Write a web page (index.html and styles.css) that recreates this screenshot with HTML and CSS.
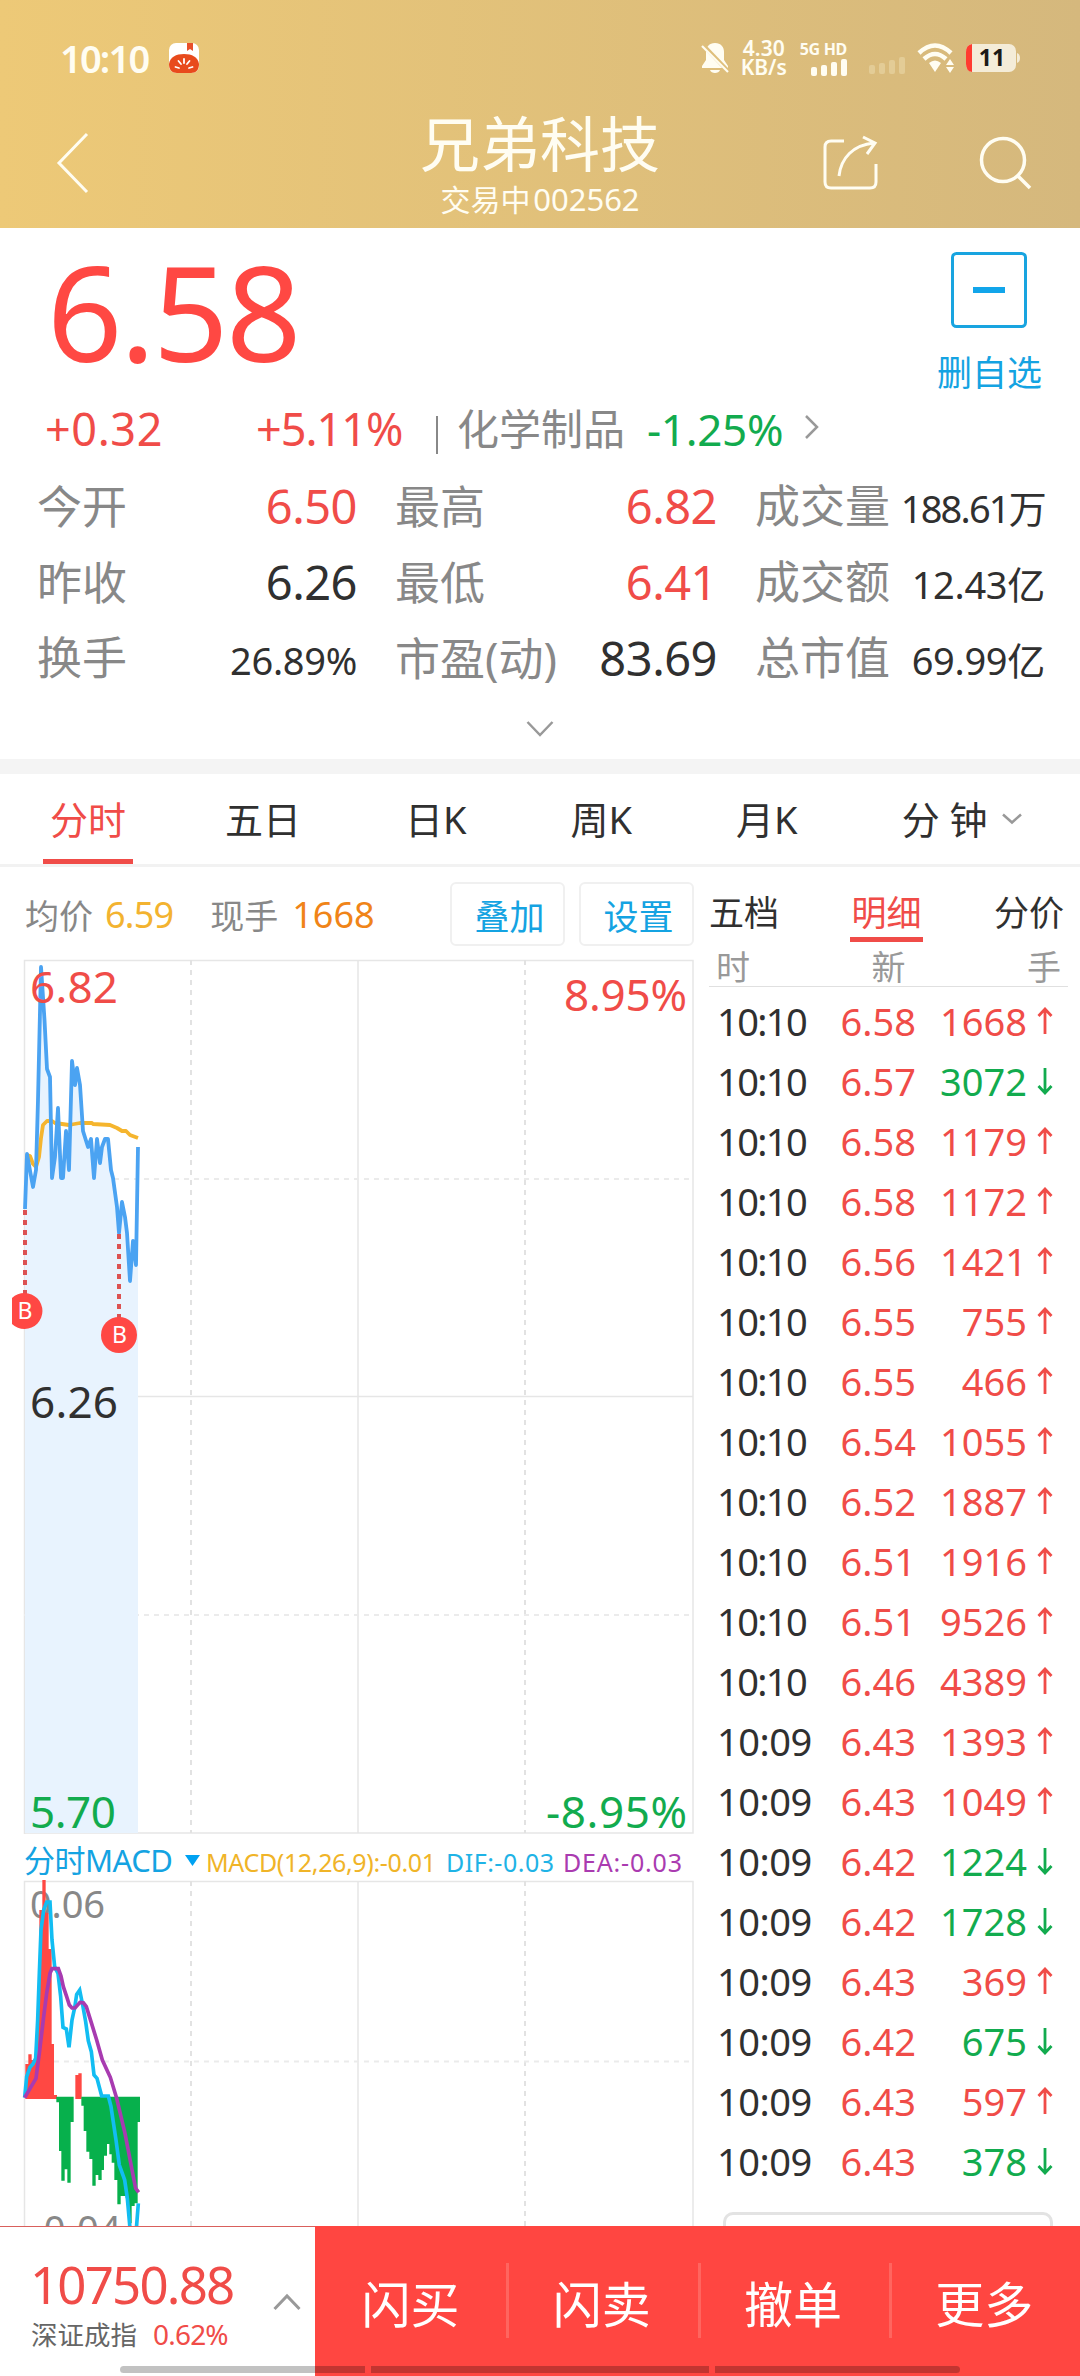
FILE: index.html
```html
<!DOCTYPE html>
<html lang="zh-CN">
<head>
    <meta charset="UTF-8">
    <meta name="viewport" content="width=device-width, initial-scale=1.0">
    <title>兄弟科技 002562</title>
    <link rel="stylesheet" href="styles.css">
</head>
<body>
    <svg width="0" height="0" class="defs">
        <symbol id="up" viewBox="0 0 16 28"><path d="M8 27V2M1.500 9L8 2l6.500 7" fill="none" stroke="currentColor" stroke-width="2.800"/></symbol>
        <symbol id="down" viewBox="0 0 16 28"><path d="M8 1v25M1.500 19L8 26l6.500-7" fill="none" stroke="currentColor" stroke-width="2.800"/></symbol>
    </svg>

    <header class="header">
        <div class="status-bar">
            <span class="clock">10:10</span>
            <svg class="tomato" width="30" height="30" viewBox="0 0 30 30">
                <rect width="30" height="30" rx="7" fill="#fff"/>
                <path d="M18 0h6v8l-3-2-3 2z" fill="#e8502a"/>
                <path d="M0 21C1 14 7 11 15 11s14 3 15 10c0 6-3 9-8 9H8c-5 0-8-3-8-9z" fill="#e84a1c"/>
                <path d="M15 16v4M9.500 18l2.500 3M20.500 18L18 21M6.500 24l3.500 1M23.500 24L20 25" stroke="#fff" stroke-width="1.800" stroke-linecap="round"/>
            </svg>
            <svg class="bell" width="28" height="32" viewBox="0 0 28 32">
                <path d="M14 1c-6 0-9 4-9 9v8l-4 6v2h26v-2l-4-6v-8c0-5-3-9-9-9zM9 28h10c-1 4-9 4-10 0z" fill="#fffdf2"/>
                <path d="M1 2l26 27" stroke="#dfbf7b" stroke-width="4"/>
                <path d="M1 4l26 26" stroke="#fffdf2" stroke-width="2.200"/>
            </svg>
            <div class="net-speed"><span>4.30</span><span>KB/s</span></div>
            <div class="signal">
                <span>5G HD</span>
                <svg width="36" height="17" viewBox="0 0 36 17" fill="#fffdf2">
                    <rect x="0" y="8" width="6" height="9" rx="2"/><rect x="10" y="6" width="6" height="11" rx="2"/>
                    <rect x="20" y="3" width="6" height="14" rx="2"/><rect x="30" y="0" width="6" height="17" rx="2"/>
                </svg>
            </div>
            <svg class="signal-off" width="36" height="17" viewBox="0 0 36 17" fill="#e3cc96">
                <rect x="0" y="8" width="6" height="9" rx="2"/><rect x="10" y="6" width="6" height="11" rx="2"/>
                <rect x="20" y="3" width="6" height="14" rx="2"/><rect x="30" y="0" width="6" height="17" rx="2"/>
            </svg>
            <svg class="wifi" width="38" height="30" viewBox="0 0 38 30">
                <path d="M2 10Q18 -5 34 10M7 16Q18 6 29 16" fill="none" stroke="#fffdf2" stroke-width="4.500"/>
                <path d="M12 20q6-5 12 0l-6 9z" fill="#fffdf2"/>
                <path d="M33 16l4 6h-8zM33 30l4-6h-8z" fill="#fffdf2"/>
            </svg>
            <svg class="battery" width="54" height="28" viewBox="0 0 54 28">
                <rect width="50" height="28" rx="7" fill="#f4ecd8"/>
                <path d="M51 9q3 1 3 5t-3 5z" fill="#f4ecd8"/>
                <path d="M6 0v28Q0 27 0 20V8Q0 1 6 0z" fill="#ff3b30"/>
                <text x="26" y="22" text-anchor="middle" class="battery-text">11</text>
            </svg>
        </div>
        <div class="nav">
            <svg class="back" width="34" height="62" viewBox="0 0 34 62"><path d="M31 2L3 31l28 29" fill="none" stroke="#fffdf2" stroke-width="3"/></svg>
            <div class="nav-title">
                <h1>兄弟科技</h1>
                <p>交易中 <span>002562</span></p>
            </div>
            <div class="nav-icons">
                <svg width="56" height="56" viewBox="0 0 56 56" fill="none" stroke="#fffdf2" stroke-width="3">
                    <path d="M22 6H9Q3 6 3 12v35q0 6 6 6h39q6 0 6-6V29"/>
                    <path d="M17 41C19 23 31 10 52 8M41 2l12 6-8 11"/>
                </svg>
                <svg width="56" height="56" viewBox="0 0 56 56" fill="none" stroke="#fffdf2" stroke-width="3.500">
                    <circle cx="25" cy="25" r="21.500"/><path d="M40 41l12 12"/>
                </svg>
            </div>
        </div>
    </header>

    <section class="quote">
        <div class="quote-top">
            <div class="price">6.58</div>
            <button class="watch-btn">
                <svg width="76" height="76" viewBox="0 0 76 76"><rect x="1.500" y="1.500" width="73" height="73" rx="4" fill="none" stroke="#18a4e0" stroke-width="3"/><path d="M22 38h32" stroke="#12a5ea" stroke-width="6"/></svg>
                <span>删自选</span>
            </button>
        </div>
        <div class="change">
            <span class="red diff">+0.32</span>
            <span class="red pct">+5.11%</span>
            <i class="bar"></i>
            <span class="sector">化学制品</span>
            <span class="green sector-pct">-1.25%</span>
            <svg width="16" height="26" viewBox="0 0 16 26"><path d="M2 2l11 11L2 24" fill="none" stroke="#999" stroke-width="2.500"/></svg>
        </div>
        <div class="stats">
            <div class="stat"><label>今开</label><b class="red">6.50</b></div>
            <div class="stat"><label>最高</label><b class="red">6.82</b></div>
            <div class="stat"><label>成交量</label><b class="small volume">188.61万</b></div>
            <div class="stat"><label>昨收</label><b>6.26</b></div>
            <div class="stat"><label>最低</label><b class="red">6.41</b></div>
            <div class="stat"><label>成交额</label><b class="small">12.43亿</b></div>
            <div class="stat"><label>换手</label><b class="small">26.89%</b></div>
            <div class="stat"><label>市盈(动)</label><b>83.69</b></div>
            <div class="stat"><label>总市值</label><b class="small">69.99亿</b></div>
        </div>
        <svg class="expand" width="28" height="18" viewBox="0 0 28 18"><path d="M1.500 2L14 15 26.500 2" fill="none" stroke="#999" stroke-width="2.500"/></svg>
    </section>

    <nav class="tabs">
        <a class="active">分时</a>
        <a>五日</a>
        <a>日K</a>
        <a>周K</a>
        <a>月K</a>
        <a class="minutes">分 钟<svg width="20" height="12" viewBox="0 0 20 12"><path d="M1 1.500l9 8 9-8" fill="none" stroke="#999" stroke-width="2.500"/></svg></a>
    </nav>

    <main class="main">
        <div class="charts">
            <div class="chart-head">
                <span class="grey">均价</span><span class="avg">6.59</span>
                <span class="grey hand-label">现手</span><span class="hand">1668</span>
                <div class="chart-btns"><button>叠加</button><button>设置</button></div>
            </div>

            <svg class="chart" width="700" height="882" viewBox="0 952 700 882">
                <path d="M24.500 1834V960.500H693V1833H24M358 960v873M24 1396.500h669" fill="none" stroke="#e6e6e6" stroke-width="1.500"/>
                <path d="M191 960v873M525 960v873" stroke="#e2e2e2" stroke-width="2" stroke-dasharray="5 5"/>
                <path d="M24 1179h669M24 1615h669" stroke="#ebebeb" stroke-width="2" stroke-dasharray="5 5"/>
                <path d="M25 1833V1209L27 1154 33 1187 36 1170 38 1100 41 967 44.500 1020 47 1069 50 1077 52 1178 55 1157 58 1108 61 1178H63L66 1131 69 1170 72 1061 75 1085 77 1068 80 1085 83 1131 88 1147 91 1139 94 1178 97 1139 100 1163 102 1147 105 1139H108L111 1170 113 1178 117 1207 119 1233 122 1202 125 1217 127 1233 130 1281 133 1241 136 1265 138 1147V1833z" fill="#e8f3fe"/>
                <polyline class="line" stroke="#f5b52e" points="27,1155 30,1156 33,1164 36,1167 39,1157 41,1138 43,1125 47,1121 52,1121 55,1123 62,1124 69,1125 80,1123 92,1123 93,1124 110,1125 117,1128 122,1131 126,1131 130,1135 138,1138"/>
                <polyline class="line" stroke="#4ba3f2" points="25,1209 27,1154 33,1187 36,1170 38,1100 41,967 44.500,1020 47,1069 50,1077 52,1178 55,1157 58,1108 61,1178 63,1178 66,1131 69,1170 72,1061 75,1085 77,1068 80,1085 83,1131 88,1147 91,1139 94,1178 97,1139 100,1163 102,1147 105,1139 108,1139 111,1170 113,1178 117,1207 119,1233 122,1202 125,1217 127,1233 130,1281 133,1241 136,1265 138,1147"/>
                <path d="M25 1210v84M119 1234v84" stroke="#dc5252" stroke-width="4" stroke-dasharray="5 5"/>
                <path d="M12 1298a18 18 0 1 1 0 26z" fill="#ff4844"/>
                <circle cx="119" cy="1335" r="18" fill="#ff4844"/>
                <text class="marker" x="25" y="1318.500">B</text>
                <text class="marker" x="119.500" y="1342.500">B</text>
                <text class="axis red" x="30" y="1003" textLength="88">6.82</text>
                <text class="axis red" x="564" y="1011" textLength="123">8.95%</text>
                <text class="axis" x="30" y="1418" textLength="88">6.26</text>
                <text class="axis green" x="30" y="1828" textLength="86">5.70</text>
                <text class="axis green" x="546" y="1828" textLength="141">-8.95%</text>
            </svg>

            <svg class="macd" width="700" height="392" viewBox="0 1834 700 392">
                <text class="macd-name" x="24" y="1872" textLength="149">分时MACD</text>
                <path d="M185 1855h15l-7.500 11z" fill="#00a2f2"/>
                <text class="macd-val" fill="#f0b428" x="206" y="1872" textLength="230">MACD(12,26,9):-0.01</text>
                <text class="macd-val" fill="#1fb3e6" x="446" y="1872" textLength="108">DIF:-0.03</text>
                <text class="macd-val" fill="#aa3bb0" x="563" y="1872" textLength="119">DEA:-0.03</text>
                <path d="M24.500 2230V1881.500H693V2230M358 1881v349" fill="none" stroke="#e6e6e6" stroke-width="1.500"/>
                <path d="M191 1881v349M525 1881v349" stroke="#e2e2e2" stroke-width="2" stroke-dasharray="5 5"/>
                <path d="M24 2061.500h669" stroke="#ebebeb" stroke-width="2" stroke-dasharray="5 5"/>
                <text class="macd-axis" x="30" y="1918" textLength="75">0.06</text>
                <text class="macd-axis" x="31" y="2243" textLength="90">-0.04</text>
                <g transform="translate(0 1840) scale(.33333)" fill="none">
                    <path stroke="#ff4843" stroke-width="10" d="M81 777V672M90 777V643M99 777V660M108 777V655M117 777V480M123 777V210M132 777V120M141 777V218M150 777V327M157 777V612M166 777V765M231 777V705M240 777V700"/>
                    <path stroke="#07b04c" stroke-width="10" d="M174 770V787M182 770V933M189 770V1022M198 770V988M207 770V1028M216 770V846M249 770V797M256 770V873M264 770V935M273 770V957M282 770V1037M291 770V1005M300 770V1020M307 770V990M316 770V947M324 770V912M333 770V943M340 770V968M348 770V1020M357 770V1093M366 770V1068M374 770V1068M382 770V1075M390 770V1150M399 770V1098M408 770V1090M415 770V846"/>
                    <polyline stroke="#12bdf2" stroke-width="11" points="74,773 80,710 90,682 99,672 107,655 113,540 118,400 123,270 131,210 140,186 150,186 156,300 164,380 174,400 182,470 189,562 199,567 207,622 216,540 224,503 230,463 239,450 248,495 257,545 265,603 274,635 282,705 291,715 305,768 325,768 333,800 348,900 358,975 374,1020 382,1075 390,1165 395,1240 408,1180 415,1090"/>
                    <polyline stroke="#a83bb0" stroke-width="11" points="74,773 108,715 118,640 131,530 140,460 150,400 156,386 175,386 183,408 190,440 200,470 208,495 216,504 225,504 240,487 250,488 259,500 273,545 290,600 307,660 331,712 350,775 375,880 400,1010 407,1045 416,1057"/>
                </g>
            </svg>
        </div>

        <aside class="trades">
            <div class="trade-tabs"><a>五档</a><a class="active">明细</a><a>分价</a></div>
            <div class="trade-head"><span>时</span><span>新</span><span>手</span></div>
            <ul class="trade-list">
                <li><time>10:10</time><b>6.58</b><em>1668</em><svg><use href="#up"/></svg></li>
                <li><time>10:10</time><b>6.57</b><em class="green">3072</em><svg class="green"><use href="#down"/></svg></li>
                <li><time>10:10</time><b>6.58</b><em>1179</em><svg><use href="#up"/></svg></li>
                <li><time>10:10</time><b>6.58</b><em>1172</em><svg><use href="#up"/></svg></li>
                <li><time>10:10</time><b>6.56</b><em>1421</em><svg><use href="#up"/></svg></li>
                <li><time>10:10</time><b>6.55</b><em>755</em><svg><use href="#up"/></svg></li>
                <li><time>10:10</time><b>6.55</b><em>466</em><svg><use href="#up"/></svg></li>
                <li><time>10:10</time><b>6.54</b><em>1055</em><svg><use href="#up"/></svg></li>
                <li><time>10:10</time><b>6.52</b><em>1887</em><svg><use href="#up"/></svg></li>
                <li><time>10:10</time><b>6.51</b><em>1916</em><svg><use href="#up"/></svg></li>
                <li><time>10:10</time><b>6.51</b><em>9526</em><svg><use href="#up"/></svg></li>
                <li><time>10:10</time><b>6.46</b><em>4389</em><svg><use href="#up"/></svg></li>
                <li><time>10:09</time><b>6.43</b><em>1393</em><svg><use href="#up"/></svg></li>
                <li><time>10:09</time><b>6.43</b><em>1049</em><svg><use href="#up"/></svg></li>
                <li><time>10:09</time><b>6.42</b><em class="green">1224</em><svg class="green"><use href="#down"/></svg></li>
                <li><time>10:09</time><b>6.42</b><em class="green">1728</em><svg class="green"><use href="#down"/></svg></li>
                <li><time>10:09</time><b>6.43</b><em>369</em><svg><use href="#up"/></svg></li>
                <li><time>10:09</time><b>6.42</b><em class="green">675</em><svg class="green"><use href="#down"/></svg></li>
                <li><time>10:09</time><b>6.43</b><em>597</em><svg><use href="#up"/></svg></li>
                <li><time>10:09</time><b>6.43</b><em class="green">378</em><svg class="green"><use href="#down"/></svg></li>
            </ul>
            <div class="more-box"></div>
        </aside>
    </main>

    <footer class="footer">
        <div class="index">
            <div>
                <div class="index-value">10750.88</div>
                <div class="index-name">深证成指<span>0.62%</span></div>
            </div>
            <svg width="28" height="18" viewBox="0 0 28 18"><path d="M1.500 16L14 3l12.500 13" fill="none" stroke="#999" stroke-width="3"/></svg>
        </div>
        <a>闪买</a>
        <a>闪卖</a>
        <a>撤单</a>
        <a>更多</a>
        <div class="home-bar"><i></i><i></i><i></i></div>
    </footer>
</body>
</html>
```

FILE: styles.css
```css
:root {
    --red: #f04c48;
    --green: #12ab4e;
    --blue: #14a3e2;
    --text: #303030;
    --grey: #888;
    --cream: #fffdf2;
}

* {
    margin: 0;
    padding: 0;
    box-sizing: border-box;
}

body {
    width: 1080px;
    height: 2376px;
    overflow: hidden;
    display: flex;
    flex-direction: column;
    background: #fff;
    color: var(--text);
    font-family: "Noto Sans", "Noto Sans CJK SC", sans-serif;
}

svg {
    display: block;
    flex: none;
    overflow: visible;
}

b, em {
    font-weight: normal;
    font-style: normal;
}

button {
    font-family: inherit;
    background: none;
    border: none;
    color: var(--blue);
}

span, a, label, button {
    white-space: nowrap;
}

.defs { position: absolute; }
.red { color: var(--red); fill: var(--red); }
.green { color: var(--green); fill: var(--green); }

/* Header */
.header {
    height: 228px;
    flex: none;
    background: linear-gradient(90deg, #edc977, #d5b87d);
    color: var(--cream);
}

.status-bar {
    height: 116px;
    padding: 0 60px 0 60px;
    display: flex;
    align-items: center;
}

.clock {
    font-size: 38px;
    font-weight: 600;
    width: 110px;
    letter-spacing: -1.8px;
}

.bell { margin-left: 502px; }

.net-speed {
    width: 62px;
    margin-left: 4px;
    display: flex;
    flex-direction: column;
    align-items: center;
    font-size: 21px;
    font-weight: 600;
    line-height: 19px;
}

.signal {
    width: 56px;
    display: flex;
    flex-direction: column;
    align-items: flex-end;
    font-size: 16px;
    font-weight: 700;
    line-height: 16px;
    gap: 2px;
    margin-left: -3px;
    letter-spacing: -0.3px;
}

.signal-off { margin: 15px 0 0 22px; }
.wifi { margin: 0 11px 0 12px; }

.battery-text {
    font-size: 23px;
    font-weight: 700;
    fill: #1c1a17;
}

.nav {
    height: 112px;
    padding-left: 56px;
    display: flex;
}

.back { margin-top: 16px; }

.nav-title {
    width: 240px;
    margin-left: 330px;
    text-align: center;
}

.nav-title h1 {
    font-size: 60px;
    font-weight: 400;
    line-height: 60px;
    margin-top: -2px;
    white-space: nowrap;
}

.nav-title p {
    font-size: 30px;
    line-height: 50px;
    word-spacing: -5px;
    white-space: nowrap;
}

.nav-title span { font-size: 31px; }

.nav-icons {
    display: flex;
    gap: 100px;
    margin: 19px 0 0 162px;
}

/* Quote */
.quote {
    height: 546px;
    flex: none;
    border-bottom: 15px solid #f4f4f4;
}

.quote-top {
    height: 166px;
    padding: 24px 38px 0 47px;
    display: flex;
    justify-content: space-between;
}

.price {
    font-size: 132px;
    line-height: 118px;
    letter-spacing: -2.5px;
    color: #ff4843;
}

.watch-btn {
    display: flex;
    flex-direction: column;
    align-items: center;
    font-size: 35px;
    line-height: 36px;
    gap: 27px;
}

.change {
    height: 74px;
    padding: 0 0 5px 45px;
    display: flex;
    align-items: center;
    font-size: 45px;
    line-height: 50px;
}

.diff { width: 211px; letter-spacing: 0.6px; }
.pct { width: 180px; letter-spacing: -1px; }

.bar {
    width: 2px;
    height: 38px;
    margin-top: 13px;
    background: var(--grey);
}

.sector {
    width: 190px;
    margin-left: 19px;
    font-size: 42px;
    color: var(--grey);
}

.sector-pct {
    font-size: 44px;
    width: 157px;
    letter-spacing: -0.3px;
}

.change svg { margin-top: -4px; }

.stats {
    display: grid;
    grid-template-columns: 320px 360px 328px;
    grid-auto-rows: 76px;
    padding: 0 35px 0 37px;
}

.stat {
    display: flex;
    justify-content: space-between;
    align-items: baseline;
    line-height: 76px;
}

.stat:nth-child(3n + 2) { padding-left: 38px; }
.stat:nth-child(3n) { padding-left: 38px; }
.stat label { font-size: 45px; color: var(--grey); }
.stat b { font-size: 47px; letter-spacing: -0.5px; }
.stat .small { font-size: 38px; letter-spacing: -0.3px; }
.stat .volume { letter-spacing: -1.8px; }

.expand { margin: 24px auto 0; }

/* Period tabs */
.tabs {
    height: 93px;
    flex: none;
    padding-left: 43px;
    display: flex;
    gap: 104px;
    border-bottom: 3px solid #f2f2f2;
    font-size: 38px;
    line-height: 91px;
}

.tabs .active {
    height: 90px;
    margin-right: -12px;
    padding: 0 7px;
    color: var(--red);
    border-bottom: 5px solid var(--red);
}

.minutes {
    display: flex;
    align-items: center;
    gap: 14px;
}

/* Charts */
.main {
    height: 1359px;
    flex: none;
    display: flex;
    overflow: hidden;
}

.charts { width: 700px; }

.chart-head {
    height: 85px;
    padding: 15px 6px 6px 25px;
    display: flex;
    align-items: center;
    font-size: 34px;
}

.grey { color: var(--grey); }
.avg { margin-left: 12px; font-size: 36px; letter-spacing: -0.8px; color: #f3b330; }
.hand-label { margin-left: 37px; }
.hand { margin-left: 14px; font-size: 36px; color: #f08418; }

.chart-btns {
    margin-left: auto;
    display: flex;
    gap: 14px;
}

.chart-btns button {
    width: 115px;
    height: 64px;
    border: 2px solid #f0f0f0;
    border-radius: 6px;
    font-size: 35px;
    padding-left: 4px;
}

.axis { font-size: 44px; }
text.axis:not(.red):not(.green) { fill: var(--text); }

.line {
    fill: none;
    stroke-width: 3.8;
    stroke-linejoin: round;
}

.marker {
    font-size: 23px;
    text-anchor: middle;
    fill: #fff;
}

.macd-name { font-size: 31px; fill: var(--blue); }
.macd-val { font-size: 25px; }
.macd-axis { font-size: 38px; fill: var(--grey); }

/* Trade details */
.trades {
    width: 380px;
    padding: 0 12px 0 9px;
}

.trade-tabs {
    height: 75px;
    padding-top: 22px;
    display: flex;
    justify-content: space-between;
    font-size: 35px;
    line-height: 47px;
    padding-right: 4px;
}

.trade-tabs .active {
    height: 53px;
    padding: 0 1px;
    color: var(--red);
    border-bottom: 5px solid var(--red);
}

.trade-head {
    height: 45px;
    padding: 0 7px;
    display: flex;
    justify-content: space-between;
    font-size: 34px;
    line-height: 50px;
    color: #999;
    border-bottom: 1px solid #e0e0e0;
}

.trade-list {
    list-style: none;
    padding: 4px 15px 0 8px;
}

.trade-list li {
    height: 60px;
    display: flex;
    align-items: center;
    font-size: 38px;
    color: var(--red);
}

.trade-list time { width: 124px; color: var(--text); letter-spacing: -0.5px; }
.trade-list li:nth-child(-n + 12) time { letter-spacing: -1.6px; }
.trade-list b { width: 80px; }
.trade-list em { width: 107px; text-align: right; }
.trade-list svg { width: 16px; height: 28px; margin-left: 10px; }

.more-box {
    height: 40px;
    margin: 21px 15px 0 14px;
    border: 3px solid #e3e3e3;
    border-radius: 10px;
}

/* Footer */
.footer {
    height: 150px;
    flex: none;
    display: flex;
    background: #ff4641;
    position: relative;
}

.index {
    width: 315px;
    height: 150px;
    padding: 32px 14px 0 31px;
    display: flex;
    justify-content: space-between;
    background: #fff;
    border-top: 1px solid #d9605c;
}

.index svg { margin-top: 34px; }

.index-value {
    font-size: 51px;
    line-height: 50px;
    letter-spacing: -1.8px;
    margin-left: -1px;
    color: var(--red);
}

.index-name {
    font-size: 26.5px;
    line-height: 50px;
    color: #666;
}

.index-name span {
    margin-left: 16px;
    font-size: 28px;
    letter-spacing: -0.8px;
    color: var(--red);
}

.footer a {
    flex: 1;
    display: flex;
    align-items: center;
    justify-content: center;
    font-size: 49px;
    color: #fff;
}

.footer a + a {
    background: linear-gradient(#ff655f, #ff655f) 0 37px / 3px 75px no-repeat;
}

.home-bar {
    position: absolute;
    left: 120px;
    bottom: 3px;
    width: 840px;
    height: 7px;
    display: flex;
    gap: 6px;
    border-radius: 4px;
    overflow: hidden;
}

.home-bar i { background: rgba(0, 0, 0, 0.24); flex: 245; }
.home-bar i:nth-child(2) { flex: 338; }
```
